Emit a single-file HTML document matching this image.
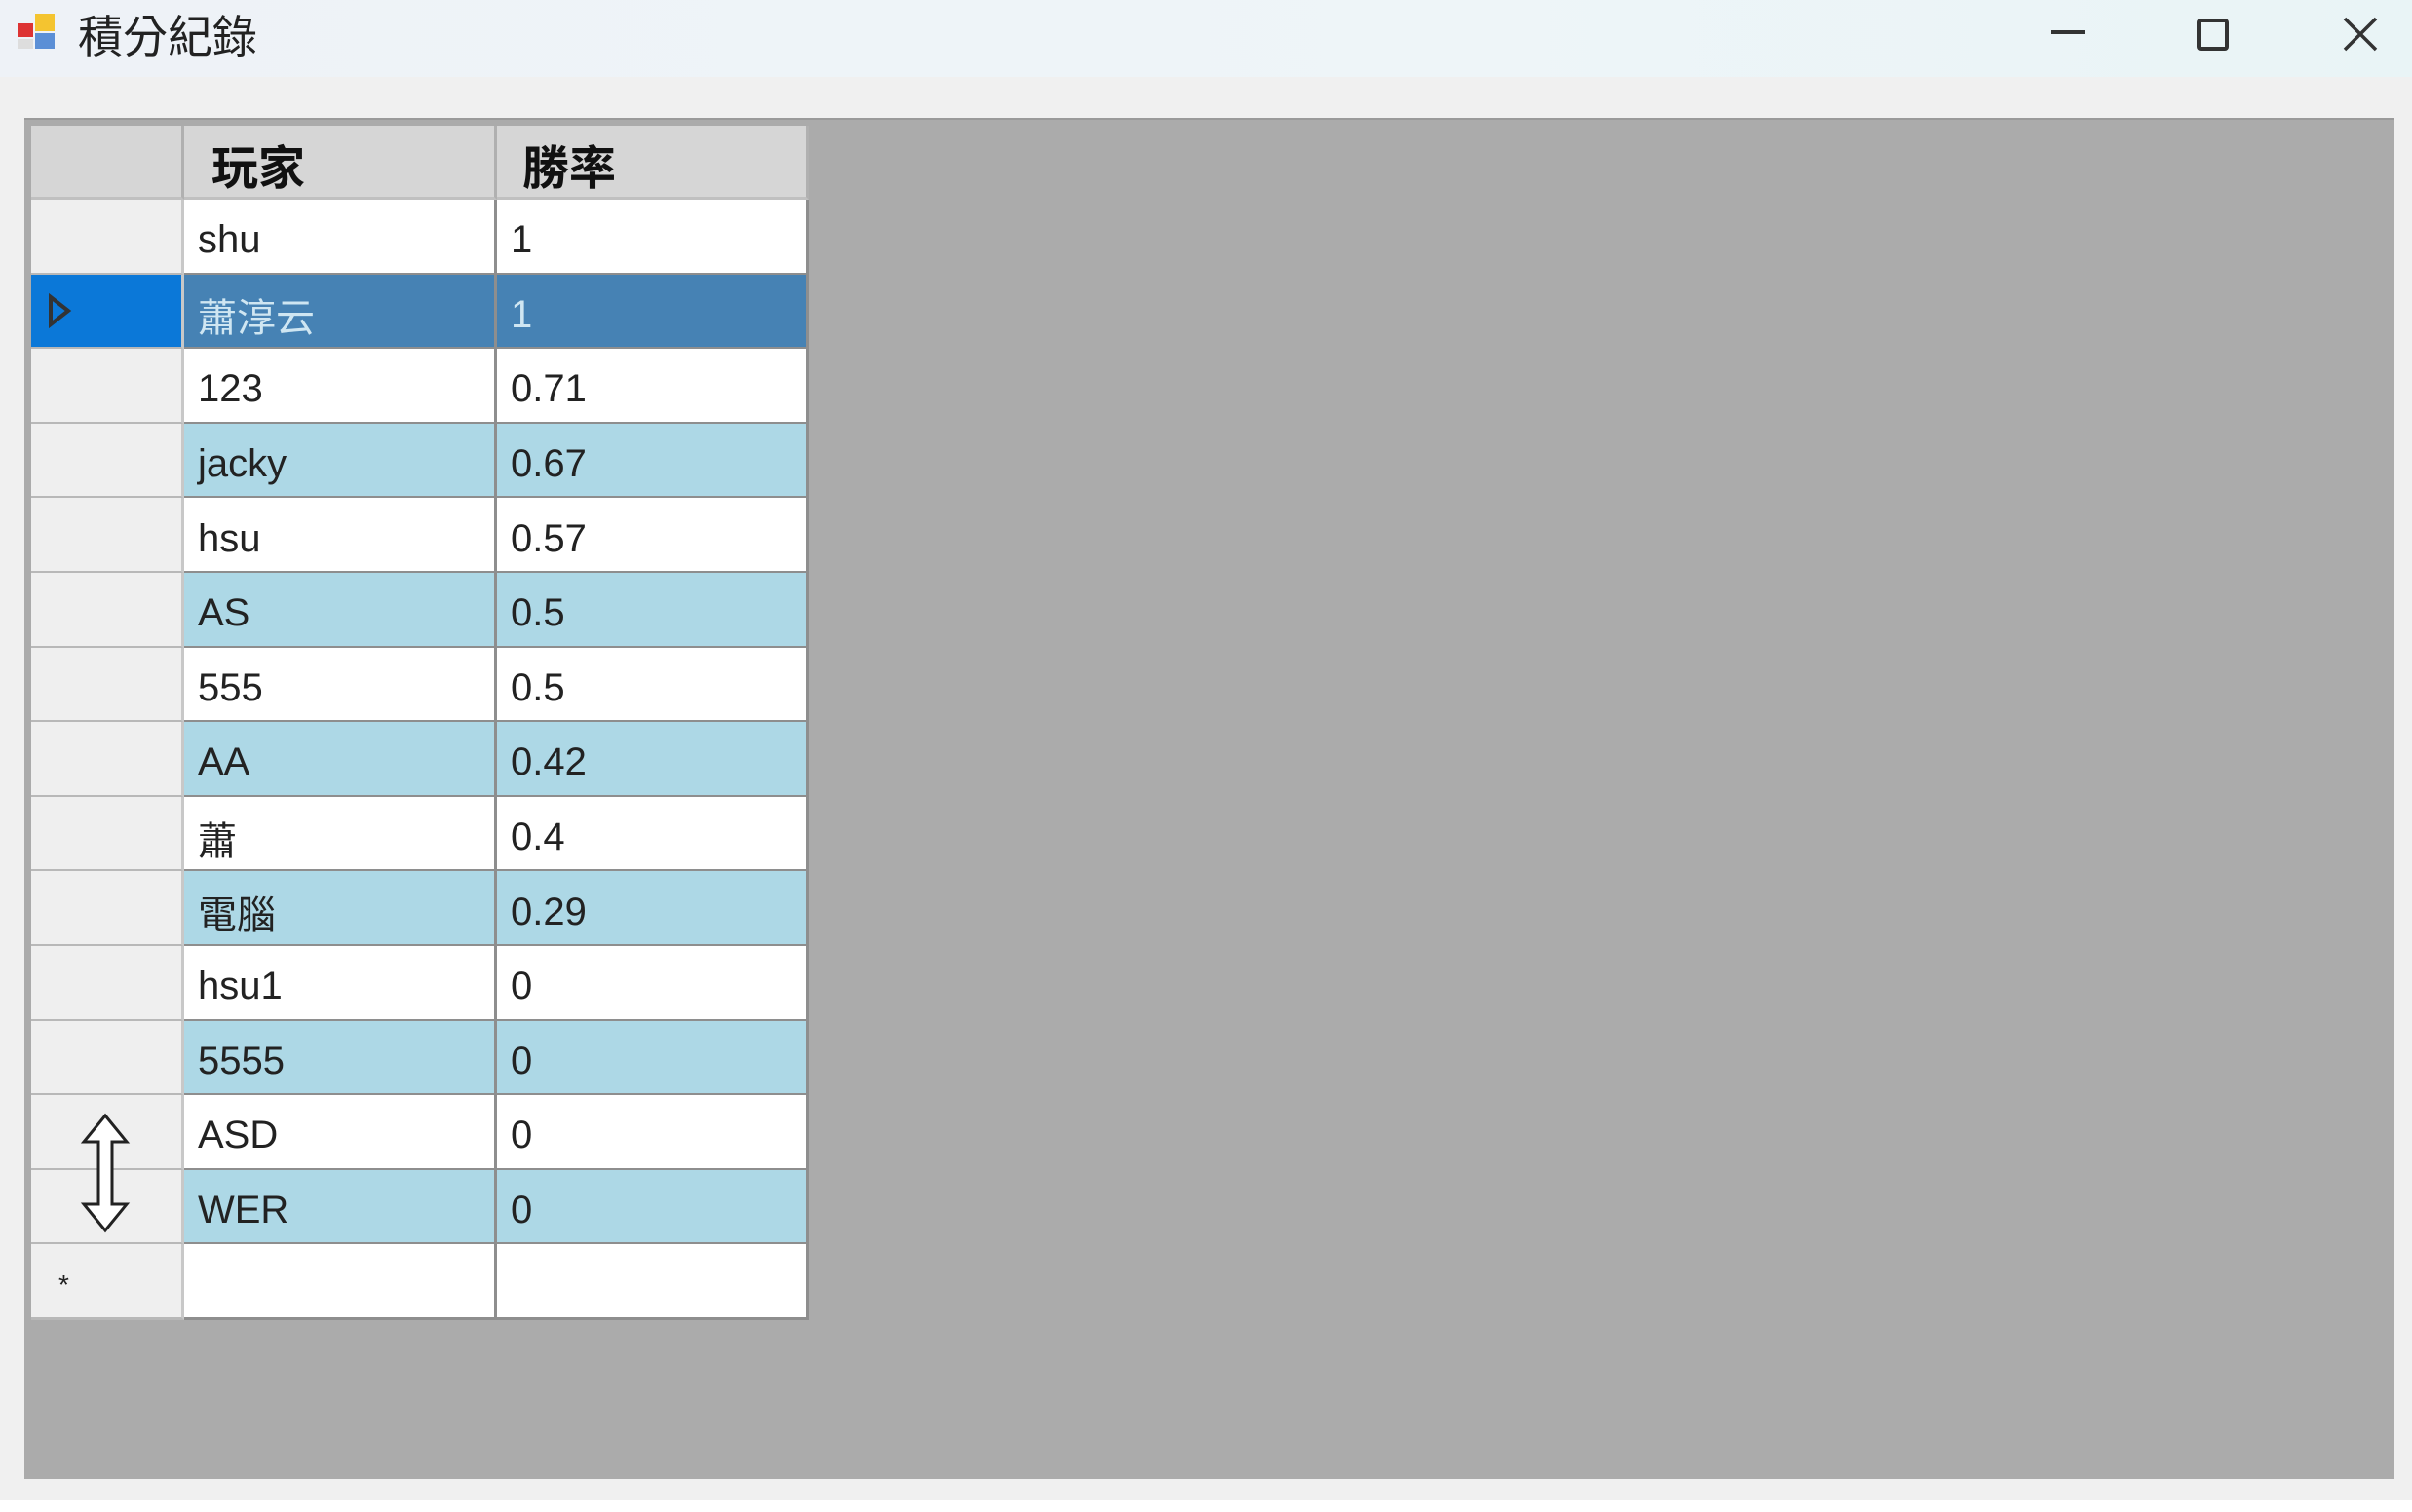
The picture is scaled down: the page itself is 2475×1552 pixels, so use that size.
<!DOCTYPE html>
<html><head><meta charset="utf-8"><style>
*{margin:0;padding:0;box-sizing:border-box}
body{width:2475px;height:1552px;background:#f0f0f0;position:relative;overflow:hidden;font-family:"Liberation Sans","Noto Sans CJK TC",sans-serif}
.title{position:absolute;left:0;top:0;width:2475px;height:79px;background:linear-gradient(90deg,#eef2f7,#eef5f8 60%,#e9f4f6)}
.ttext{position:absolute;left:80px;top:2px;font-size:46px;color:#222;font-family:"Liberation Sans","Noto Sans CJK TC",sans-serif}
.grey{position:absolute;left:25px;top:121px;width:2432px;height:1397px;background:#ababab;border-top:2px solid #9a9a9a}
.bot{position:absolute;left:0;top:1540px;width:2475px;height:12px;background:#fff}
.c{position:absolute;border-right:3px solid #8e8e8e;border-bottom:3px solid #8e8e8e;font-size:40px;color:#222;padding-left:14px;padding-top:9px;display:flex;align-items:center}
.rh{background:#efefef;border-right:3px solid #c8c8c8;border-bottom:3px solid #b8b8b8;padding-top:0}
.hd{background:#d6d6d6;font-weight:bold;font-size:48px;color:#111;border-bottom:3px solid #c0c0c0;border-right:3px solid #b0b0b0;padding-top:4px}
</style></head><body>
<div class="title">
<svg style="position:absolute;left:16px;top:10px" width="44" height="44" viewBox="0 0 44 44">
<rect x="20" y="4" width="20" height="18" fill="#f4c430"/><rect x="2" y="14" width="16" height="14" fill="#d33"/><rect x="20" y="24" width="20" height="16" fill="#5b8fd6"/><rect x="2" y="30" width="16" height="10" fill="#ddd"/></svg>
<div class="ttext">積分紀錄</div>
<div style="position:absolute;left:2105px;top:31px;width:34px;height:4px;background:#333"></div>
<div style="position:absolute;left:2254px;top:19px;width:33px;height:33px;border:4px solid #333;border-radius:4px"></div>
<svg style="position:absolute;left:2403px;top:17px" width="38" height="36" viewBox="0 0 38 36"><path d="M3 2L35 34M35 2L3 34" stroke="#333" stroke-width="3.5"/></svg>
</div>
<div class="grey"></div>
<div class="bot"></div>
<div id="g"></div>
<script>
var rows=[["shu","1"],["蕭淳云","1"],["123","0.71"],["jacky","0.67"],["hsu","0.57"],["AS","0.5"],["555","0.5"],["AA","0.42"],["蕭","0.4"],["電腦","0.29"],["hsu1","0"],["5555","0"],["ASD","0"],["WER","0"],["",""]];
var h='';var rhh=76.6;
h+='<div class="c hd" style="left:32px;top:129px;width:157px;height:76px"></div>';
h+='<div class="c hd" style="left:189px;top:129px;width:321px;height:76px;padding-left:28px">玩家</div>';
h+='<div class="c hd" style="left:510px;top:129px;width:320px;height:76px;padding-left:26px">勝率</div>';
for(var i=0;i<rows.length;i++){var y=205+i*rhh;var bg=(i==1)?'#4682b4':(i%2==1?'#add8e6':'#fff');var col=(i==1)?'#cfe6f2':'#222';
var rb=(i==1)?'#0b78d8':'#efefef';
h+='<div class="c rh" style="left:32px;top:'+y+'px;width:157px;height:'+(rhh+1)+'px;background:'+rb+'">'+(i==1?'<svg width="30" height="40" viewBox="0 0 30 40"><path d="M6 6L24 20L6 34Z" fill="none" stroke="#333" stroke-width="4"/></svg>':'')+(i==14?'<span style="font-size:28px;margin-left:14px;margin-top:8px">*</span>':'')+'</div>';
h+='<div class="c" style="left:189px;top:'+y+'px;width:321px;height:'+(rhh+1)+'px;background:'+bg+';color:'+col+'">'+rows[i][0]+'</div>';
h+='<div class="c" style="left:510px;top:'+y+'px;width:320px;height:'+(rhh+1)+'px;background:'+bg+';color:'+col+'">'+rows[i][1]+'</div>';}
h+='<svg style="position:absolute;left:82px;top:1142px" width="52" height="124" viewBox="0 0 52 124"><path d="M26 3L48 30H33V94H48L26 121L4 94H19V30H4Z" fill="#fff" stroke="#222" stroke-width="3"/></svg>';
document.getElementById('g').innerHTML=h;
</script>
</body></html>
